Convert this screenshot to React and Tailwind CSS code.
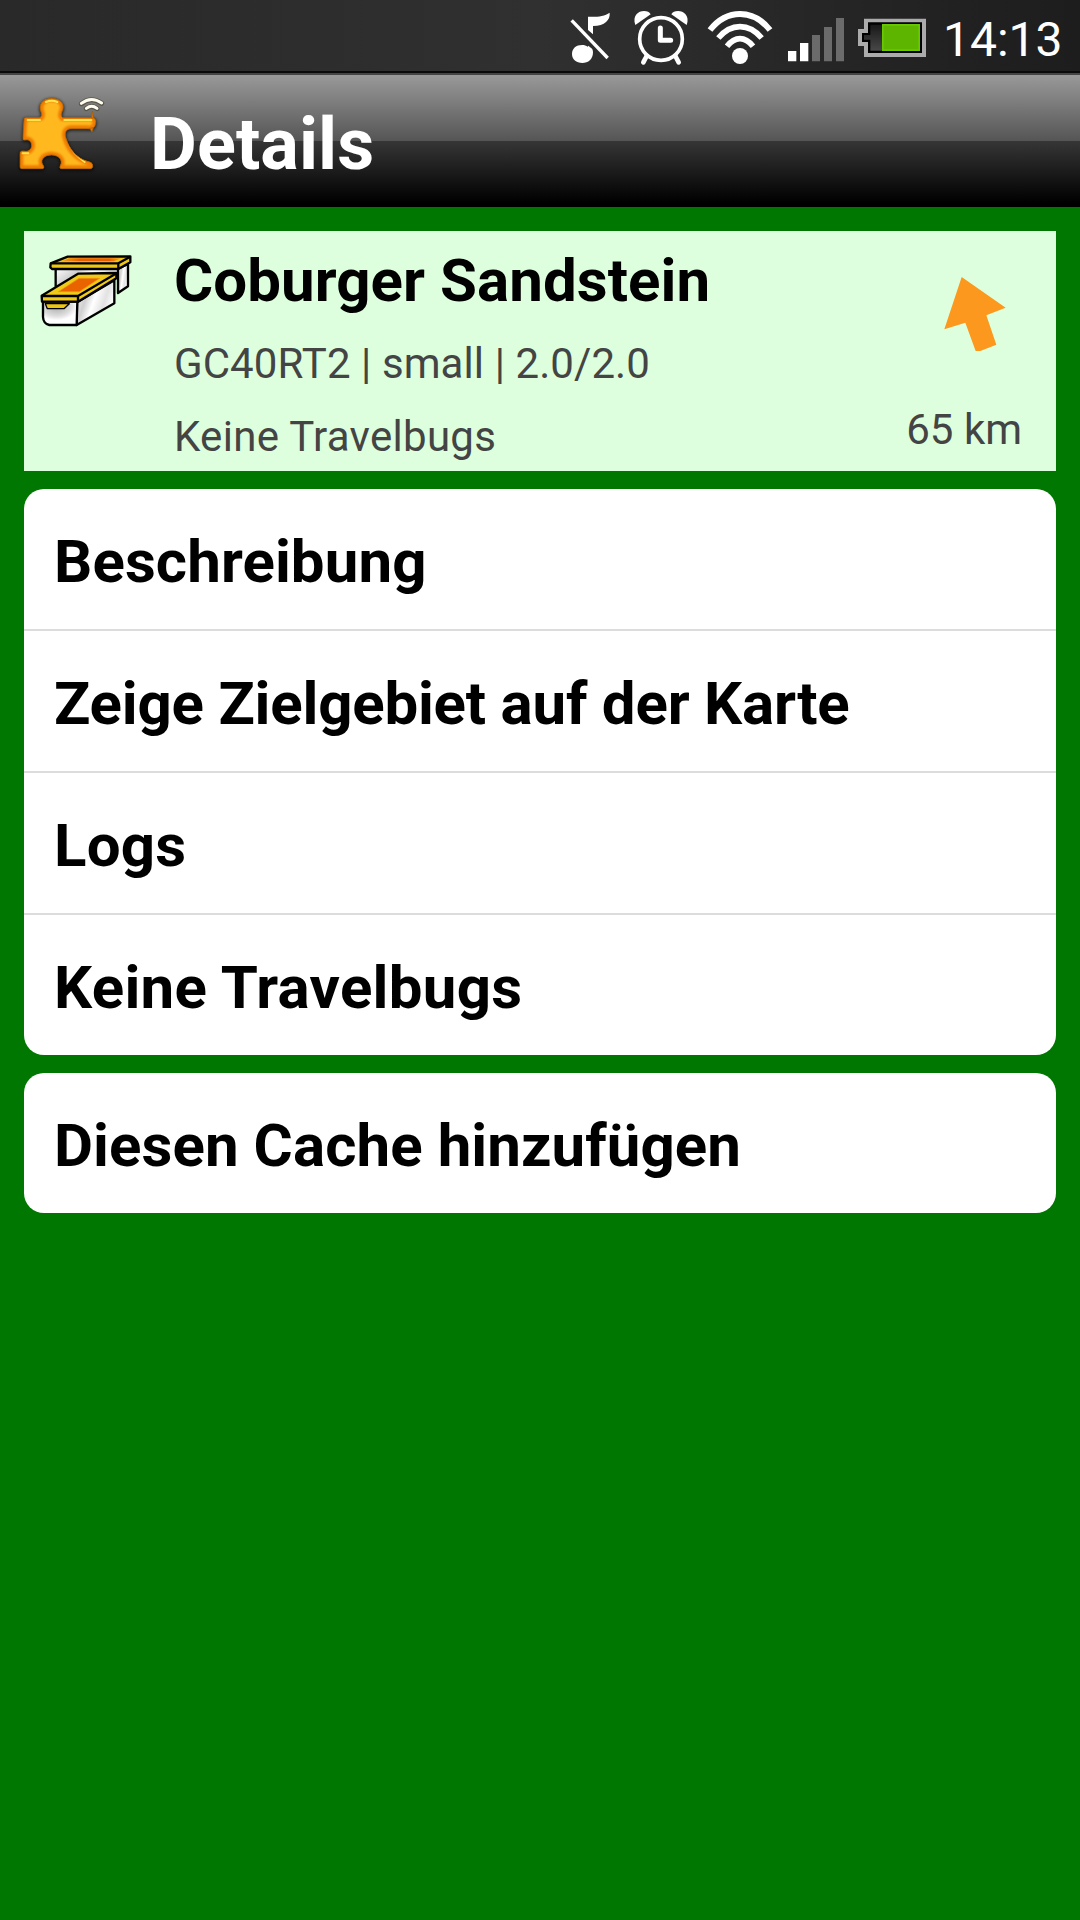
const MENU = [
  { label: 'Beschreibung', tracking: 'tracking-[0.1px]' },
  { label: 'Zeige Zielgebiet auf der Karte', tracking: 'tracking-[-0.21px]' },
  { label: 'Logs', tracking: 'tracking-[0.2px]' },
  { label: 'Keine Travelbugs', tracking: 'tracking-[0.3px]' },
];

function MutedNote() {
  return (
    <svg className="h-[72px] w-[44px] shrink-0" viewBox="54 0 132 216" fill="#fff">
      <path d="M111 50C135 51 160 50 176 38C178 60 162 77 126 78V103L111 90Z" />
      <path d="M63 162C63 145 76 135 93 135C100 135 106 137 110 140L113 137L116 141C123 144 126 149 126 157C126 178 112 189 94 189C76 189 63 178 63 162Z" />
      <path d="M62 61L170 174" stroke="#fff" strokeWidth="10" />
    </svg>
  );
}

function AlarmClock() {
  return (
    <svg className="h-[72px] w-[58px] shrink-0" viewBox="246 0 174 216" fill="none" stroke="#fff">
      <path d="M256 75C246 47 265 33 282 33C292 33 298 36 302 43Z" fill="#fff" stroke="none" />
      <path d="M410 75C420 47 401 33 384 33C374 33 368 36 364 43Z" fill="#fff" stroke="none" />
      <circle cx="333" cy="117" r="64" strokeWidth="11" />
      <path d="M331 84V121H362" strokeWidth="15" strokeLinecap="round" strokeLinejoin="round" />
      <path d="M290 168L280 187M376 168L386 187" strokeWidth="14" strokeLinecap="round" />
    </svg>
  );
}

function Wifi() {
  return (
    <svg className="h-[72px] w-[66px] shrink-0" viewBox="471 0 198 216" fill="none" stroke="#fff">
      <circle cx="570" cy="168" r="24" fill="#fff" stroke="none" />
      <path d="M480 90Q518 42 570 42Q622 42 660 90" strokeWidth="18" />
      <path d="M505 114Q534 80 570 80Q606 80 635 114" strokeWidth="17" />
      <path d="M531 139Q549 116 570 116Q591 116 609 139" strokeWidth="17" />
    </svg>
  );
}

function Signal() {
  return (
    <svg className="h-[72px] w-[56px] shrink-0" viewBox="24 0 168 216">
      <g fill="#fff">
        <path d="M24 153h25v31H24zM60 129h25v55H60z" />
      </g>
      <path fill="#6b6b6b" d="M96 105h24v79H96zM132 81h24v103h-24zM168 54h24v130h-24z" />
    </svg>
  );
}

function Battery() {
  return (
    <svg className="h-[72px] w-[68px] shrink-0" viewBox="234 0 204 216">
      <defs>
        <linearGradient id="cell" x1="0" y1="0" x2="0" y2="1">
          <stop offset="0" stopColor="#181818" />
          <stop offset="1" stopColor="#484848" />
        </linearGradient>
      </defs>
      <path fill="#ababab" d="M252 56H438V171H252V138H234V87H252Z" />
      <path fill="#000" d="M264 67H426V159H264V126H246V99H264Z" />
      <path fill="url(#cell)" d="M271 74H306V152H271V119H252V105H271Z" />
      <path fill="#68c900" d="M306 72H420V153H306Z" />
      <path fill="#5eb500" d="M311 77H415V148H311Z" />
    </svg>
  );
}

function PuzzleLogo() {
  const body =
    'M47 98H88C97 96 96 86 92 78C86 61 96 41 125 40C154 41 164 59 158 75C154 84 151 92 158 98H245C254 97 258 104 257 113C256 126 248 134 233 131H185C169 131 163 141 167 157C176 190 199 220 232 229C243 231 248 235 248 243C248 249 245 251 240 251H155C148 251 149 245 152 240C158 224 147 211 125 210C103 210 92 222 97 237C102 244 104 251 96 251H36C31 251 30 248 30 243V207C30 199 34 197 42 198C53 201 64 195 65 182C65 170 57 162 45 165C39 166 39 162 39 157L42 105Q42 98 47 98Z';
  return (
    <svg className="mb-3 h-[100px] w-[110px] shrink-0" viewBox="0 0 330 300">
      <defs>
        <clipPath id="bodyClip"><path d={body} /></clipPath>
        <filter id="soft" x="-20%" y="-20%" width="140%" height="140%"><feGaussianBlur stdDeviation="4" /></filter>
        <filter id="edge" x="-20%" y="-20%" width="140%" height="140%"><feGaussianBlur stdDeviation="3.5" /></filter>
        <filter id="shine" x="-20%" y="-20%" width="140%" height="140%"><feGaussianBlur stdDeviation="2" /></filter>
      </defs>
      <path d={body} fill="#000" stroke="#000" strokeWidth="6" opacity=".65" filter="url(#soft)" transform="translate(0 3)" />
      <path d={body} fill="#ffb91f" />
      <g clipPath="url(#bodyClip)">
        <path d={body} fill="none" stroke="#f07c00" strokeWidth="20" filter="url(#edge)" />
        <g fill="none" stroke="#ffe650" strokeWidth="6" strokeLinecap="round" filter="url(#shine)">
          <path d="M53 105H90M108 51Q125 44 142 51M163 105H244M38 205H55M173 168Q187 206 224 231" />
        </g>
      </g>
      <path d={body} fill="none" stroke="#a85c00" strokeWidth="2.5" />
      <path d="M244 99L247 78L250 99ZM239 130L246 141L250 128Z" fill="#e47b08" stroke="#a85c00" strokeWidth="2" />
      <g fill="none" strokeLinecap="round">
        <g stroke="#45402c" strokeWidth="15" opacity=".65">
          <path d="M214 56Q244 33 275 55M229 71Q245 58 261 71" />
        </g>
        <g stroke="#fffdf0" strokeWidth="9">
          <path d="M214 55Q244 32 275 54M229 70Q245 58 261 70" />
        </g>
      </g>
    </svg>
  );
}

function CacheBoxes() {
  return (
    <svg className="mt-[22px] h-[78px] w-[96px] shrink-0" viewBox="54 84 288 234" strokeLinejoin="round">
      <defs>
        <radialGradient id="front" cx=".4" cy=".2" r=".75">
          <stop offset="0" stopColor="#aaa" />
          <stop offset=".55" stopColor="#ddd" />
          <stop offset=".8" stopColor="#fff" />
        </radialGradient>
        <linearGradient id="side" x1="0" y1="0" x2="1" y2=".4">
          <stop offset="0" stopColor="#fff" />
          <stop offset=".35" stopColor="#d0d0d0" />
          <stop offset=".55" stopColor="#fff" />
          <stop offset=".8" stopColor="#e2e2e2" />
          <stop offset="1" stopColor="#fff" />
        </linearGradient>
        <linearGradient id="lid" x1="0" y1="0" x2="1" y2="0">
          <stop offset="0" stopColor="#f5a21b" />
          <stop offset=".3" stopColor="#e95e00" />
          <stop offset=".8" stopColor="#e95e00" />
          <stop offset="1" stopColor="#f7a81e" />
        </linearGradient>
      </defs>
      <g stroke="#000" strokeWidth="7">
        <path fill="url(#side)" d="M107 131H294V160L150 172L107 188Z" stroke="none" />
        <path fill="none" d="M107 131V185" />
        <path fill="url(#side)" d="M294 131L324 117V184L294 204Z" />
        <path fill="#edc615" d="M92 115L143 95L331 94V112L295 132H96L91 127Z" />
        <path fill="none" d="M92 115H295L331 95M295 115V131" />
        <path fill="url(#lid)" stroke="none" d="M147 100H303L282 109H126Z" />
        <path fill="url(#side)" d="M171 232L283 166V235L170 300Z" />
        <path fill="url(#front)" d="M69 230H172L170 300H88Q70 296 69 276Z" />
        <path fill="#f0ca15" d="M65 212L174 146L289 144V160L174 230H66Z" />
        <path fill="none" d="M65 213H174L287 146M174 213V230" />
        <path fill="#e96300" stroke="#f3981a" strokeWidth="2" d="M177 160H239L178 200H115Z" />
        <path fill="#edc615" strokeWidth="4" d="M76 236H148L132 251H82Z" />
      </g>
    </svg>
  );
}

function MenuRow({ label, tracking, last }) {
  return (
    <li
      className={
        last
          ? 'flex h-[140px] items-start pt-[37px] pl-[30px]'
          : 'flex h-[142px] items-start border-b-2 border-[#dcdcdc] pt-[37px] pl-[30px]'
      }
    >
      <span className={`text-[60px] leading-[71px] font-bold whitespace-nowrap text-black ${tracking}`}>{label}</span>
    </li>
  );
}

export default function App() {
  return (
    <div className="flex h-[1920px] w-[1080px] flex-col overflow-hidden bg-[#007700] font-[Roboto,sans-serif]">
      <header className="flex h-[75px] shrink-0 items-start justify-end border-b-2 border-[#444] bg-[#2a2a2a]">
        <div className="flex h-[73px] w-full items-start justify-end border-b-2 border-[#0a0a0a] bg-linear-to-r from-[#292929] via-[#303030] to-[#1d1d1d] pr-[19px]">
          <div className="mr-[19px]"><MutedNote /></div>
          <div className="mr-[17px]"><AlarmClock /></div>
          <div className="mr-[15px]"><Wifi /></div>
          <div className="mr-[14px]"><Signal /></div>
          <div className="mr-[17px]"><Battery /></div>
          <time className="w-[118px] pt-[4px] text-[48px] leading-[72px] whitespace-nowrap text-white">14:13</time>
        </div>
      </header>

      <div className="flex h-[132px] shrink-0 items-center bg-linear-[to_bottom,#999_0%,#555_50%,#363636_50%,#000_97%] pl-[10px]">
        <PuzzleLogo />
        <h1 className="ml-[30px] pt-[7px] text-[72px] leading-[84px] font-bold tracking-[0.1px] text-white">Details</h1>
      </div>

      <main className="flex flex-col px-6 pt-6">
        <section className="flex h-[240px] bg-[#dfd]">
          <div className="flex w-[150px] shrink-0 pl-[14px]"><CacheBoxes /></div>
          <div className="flex-1 pt-[2px] whitespace-nowrap text-[#444]">
            <h2 className="text-[60px] leading-[95px] font-bold tracking-[0.07px] text-black">Coburger Sandstein</h2>
            <p className="text-[42px] leading-[72px] tracking-[0.08px]">GC40RT2 | small | 2.0/2.0</p>
            <p className="text-[42px] leading-[73px] tracking-[0.3px]">Keine Travelbugs</p>
          </div>
          <div className="flex w-[160px] shrink-0 flex-col items-end pt-[42px] pr-[34px] text-[#444]">
            <svg className="mr-[13px] h-[82px] w-[66px]" viewBox="190 144 198 246">
              <path fill="#fb981d" d="M246 156L378 248L320 271L350 359L302 378H288L257 293L194 313Z" />
            </svg>
            <p className="mt-[40px] text-[42px] leading-[70px] whitespace-nowrap">65 km</p>
          </div>
        </section>

        <ul className="mt-[18px] overflow-hidden rounded-[20px] bg-white">
          {MENU.map((row, i) => (
            <MenuRow key={row.label} {...row} last={i === MENU.length - 1} />
          ))}
        </ul>
        <ul className="mt-[18px] overflow-hidden rounded-[20px] bg-white">
          <MenuRow label="Diesen Cache hinzufügen" tracking="tracking-[0.08px]" last />
        </ul>
      </main>
    </div>
  );
}
